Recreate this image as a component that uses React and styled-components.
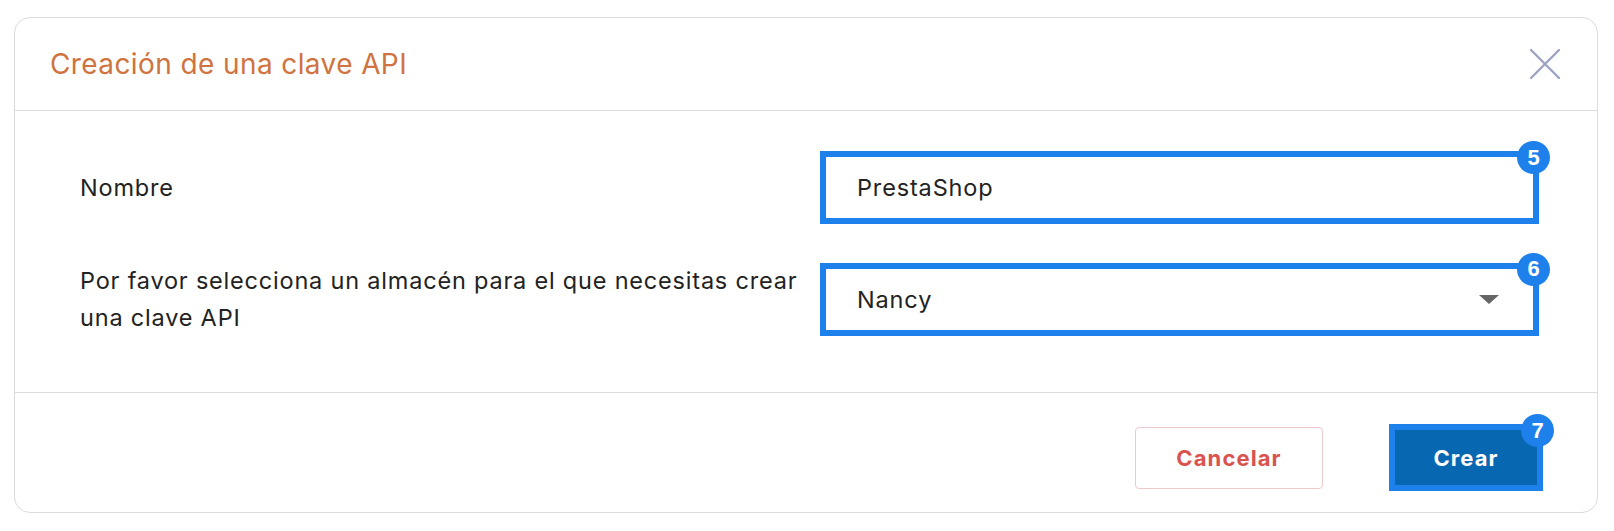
import styled, { createGlobalStyle } from "styled-components";

const GlobalStyle = createGlobalStyle`
  body {
    margin: 0;
    background: #ffffff;
    font-family: "Inter", "Liberation Sans", sans-serif;
    color: #222222;
  }
`;

const Page = styled.div`
  padding: 17px 16px 18px 14px;
`;

const Card = styled.div`
  border: 1px solid #dcdcdc;
  border-radius: 16px;
  overflow: hidden;
  background: #ffffff;
`;

const Header = styled.div`
  box-sizing: border-box;
  height: 93px;
  display: flex;
  align-items: center;
  justify-content: space-between;
  padding: 0 36px 0 35px;
  border-bottom: 1px solid #dcdcdc;
`;

const Title = styled.h3`
  margin: 0;
  font-size: 28px;
  font-weight: 400;
  letter-spacing: 0.4px;
  color: #cf7340;
`;

const CloseButton = styled.button`
  border: none;
  background: none;
  padding: 0;
  width: 32px;
  height: 32px;
  cursor: pointer;
  display: flex;
`;

const Body = styled.div`
  padding: 40px 58px 56px 65px;
  display: grid;
  grid-template-columns: 1fr 719px;
  column-gap: 16px;
  row-gap: 38px;
  align-items: center;
`;

const Label = styled.label`
  font-size: 23.5px;
  line-height: 37px;
  letter-spacing: 0.8px;
  color: #222222;
`;

const FieldBox = styled.div`
  position: relative;
  box-sizing: border-box;
  height: 73px;
  border: 6px solid #1e80ea;
  display: flex;
  align-items: center;
  justify-content: space-between;
  padding: 0 34px 0 31px;
  font-size: 23.5px;
  letter-spacing: 0.85px;
  color: #222222;
`;

const Caret = styled.span`
  width: 0;
  height: 0;
  border-left: 10px solid transparent;
  border-right: 10px solid transparent;
  border-top: 9px solid #666666;
`;

const Badge = styled.span`
  position: absolute;
  top: -16px;
  right: -17px;
  width: 33px;
  height: 33px;
  border-radius: 50%;
  background: #1e80ea;
  color: #ffffff;
  font-family: "Liberation Sans", Arial, sans-serif;
  font-weight: 700;
  font-size: 22px;
  letter-spacing: 0;
  display: flex;
  align-items: center;
  justify-content: center;
`;

const Footer = styled.div`
  border-top: 1px solid #dcdcdc;
  padding: 31px 54px 21px;
  display: flex;
  justify-content: flex-end;
  align-items: center;
  gap: 66px;
`;

const Button = styled.button`
  position: relative;
  box-sizing: border-box;
  font-family: "Inter", "Liberation Sans", sans-serif;
  font-size: 22px;
  font-weight: 700;
  letter-spacing: 1.1px;
  cursor: pointer;
  width: ${(p) => (p.$primary ? "154px" : "188px")};
  height: ${(p) => (p.$primary ? "67px" : "62px")};
  border-radius: ${(p) => (p.$primary ? "0" : "4px")};
  border: ${(p) => (p.$primary ? "6px solid #1e80ea" : "1px solid #efcaca")};
  background: ${(p) => (p.$primary ? "#0867b1" : "#ffffff")};
  color: ${(p) => (p.$primary ? "#ffffff" : "#d9534f")};
`;

function CloseIcon() {
  return (
    <svg width="32" height="32" viewBox="0 0 32 32">
      <path
        d="M2 2 L30 30 M30 2 L2 30"
        stroke="#9da3c2"
        strokeWidth="2.4"
        strokeLinecap="round"
      />
    </svg>
  );
}

export default function App() {
  return (
    <Page>
      <GlobalStyle />
      <Card>
        <Header>
          <Title>Creación de una clave API</Title>
          <CloseButton aria-label="Cerrar">
            <CloseIcon />
          </CloseButton>
        </Header>

        <Body>
          <Label>Nombre</Label>
          <FieldBox>
            PrestaShop
            <Badge>5</Badge>
          </FieldBox>

          <Label>
            Por favor selecciona un almacén para el que necesitas crear una
            clave API
          </Label>
          <FieldBox>
            Nancy
            <Caret />
            <Badge>6</Badge>
          </FieldBox>
        </Body>

        <Footer>
          <Button>Cancelar</Button>
          <Button $primary>
            Crear
            <Badge>7</Badge>
          </Button>
        </Footer>
      </Card>
    </Page>
  );
}
